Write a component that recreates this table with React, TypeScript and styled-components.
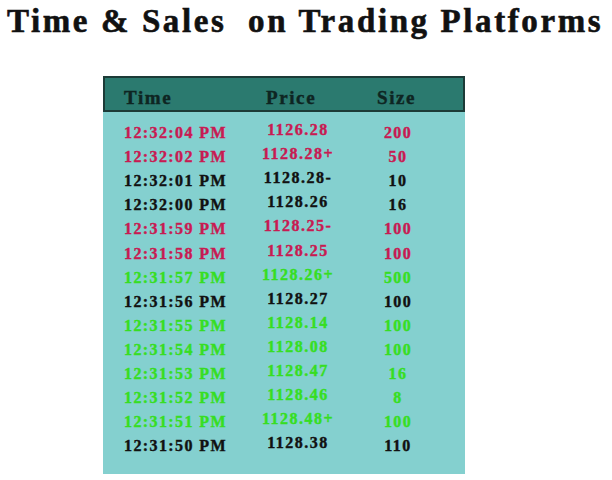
import React from "react";
import styled, { createGlobalStyle } from "styled-components";

const Global = createGlobalStyle`
  html, body { margin: 0; padding: 0; background: #ffffff; }
  body { width: 612px; height: 480px; overflow: hidden; font-family: "Liberation Serif", "Times New Roman", serif; }
`;

const Page = styled.div`
  display: flex;
  flex-direction: column;
  align-items: flex-start;
  width: 612px;
  height: 480px;
`;

const Title = styled.h1`
  margin: 3px 0 0 7px;
  font-family: "Liberation Serif", "Times New Roman", serif;
  font-weight: bold;
  font-size: 33px;
  line-height: 37px;
  letter-spacing: 2.6px;
  color: #111;
  -webkit-text-stroke: 0.6px #111;
  white-space: pre;
`;

const Panel = styled.div`
  margin: 36px 0 0 103px;
  width: 362px;
  height: 398px;
  background: #84d0cf;
  display: flex;
  flex-direction: column;
`;

const Header = styled.div`
  display: grid;
  grid-template-columns: 142px 111px 1fr;
  align-items: center;
  height: 36px;
  box-sizing: border-box;
  padding: 7px 0 0 19px;
  background: #2b7a6f;
  border: 2px solid #1c3b37;
  font-size: 19px;
  font-weight: bold;
  letter-spacing: 1.6px;
  color: #0e2522;
  -webkit-text-stroke: 0.4px #0e2522;
`;

const Body = styled.div`
  display: flex;
  flex-direction: column;
  padding: 9px 0 0 21px;
`;

const Row = styled.div<{ $c: string }>`
  display: grid;
  grid-template-columns: 129px 90px 110px;
  align-items: center;
  height: 24.1px;
  font-size: 16px;
  font-weight: bold;
  letter-spacing: 1.4px;
  color: ${(p) => p.$c};
  -webkit-text-stroke: 0.4px ${(p) => p.$c};
`;

const TimeCell = styled.span`
  white-space: nowrap;
`;

const PriceCell = styled.span`
  text-align: center;
  white-space: nowrap;
  margin-bottom: 6px;
  letter-spacing: 1.5px;
`;

const SizeCell = styled.span`
  text-align: center;
  white-space: nowrap;
`;

const RED = "#c81a52";
const GREEN = "#36de22";
const BLACK = "#111111";

const rows: [string, string, string, string][] = [
  ["12:32:04 PM", "1126.28", "200", RED],
  ["12:32:02 PM", "1128.28+", "50", RED],
  ["12:32:01 PM", "1128.28-", "10", BLACK],
  ["12:32:00 PM", "1128.26", "16", BLACK],
  ["12:31:59 PM", "1128.25-", "100", RED],
  ["12:31:58 PM", "1128.25", "100", RED],
  ["12:31:57 PM", "1128.26+", "500", GREEN],
  ["12:31:56 PM", "1128.27", "100", BLACK],
  ["12:31:55 PM", "1128.14", "100", GREEN],
  ["12:31:54 PM", "1128.08", "100", GREEN],
  ["12:31:53 PM", "1128.47", "16", GREEN],
  ["12:31:52 PM", "1128.46", "8", GREEN],
  ["12:31:51 PM", "1128.48+", "100", GREEN],
  ["12:31:50 PM", "1128.38", "110", BLACK],
];

export default function App() {
  return (
    <Page>
      <Global />
      <Title>{"Time & Sales  on Trading Platforms"}</Title>
      <Panel>
        <Header>
          <span>Time</span>
          <span>Price</span>
          <span>Size</span>
        </Header>
        <Body>
          {rows.map(([t, p, s, c]) => (
            <Row key={t} $c={c}>
              <TimeCell>{t}</TimeCell>
              <PriceCell>{p}</PriceCell>
              <SizeCell>{s}</SizeCell>
            </Row>
          ))}
        </Body>
      </Panel>
    </Page>
  );
}
